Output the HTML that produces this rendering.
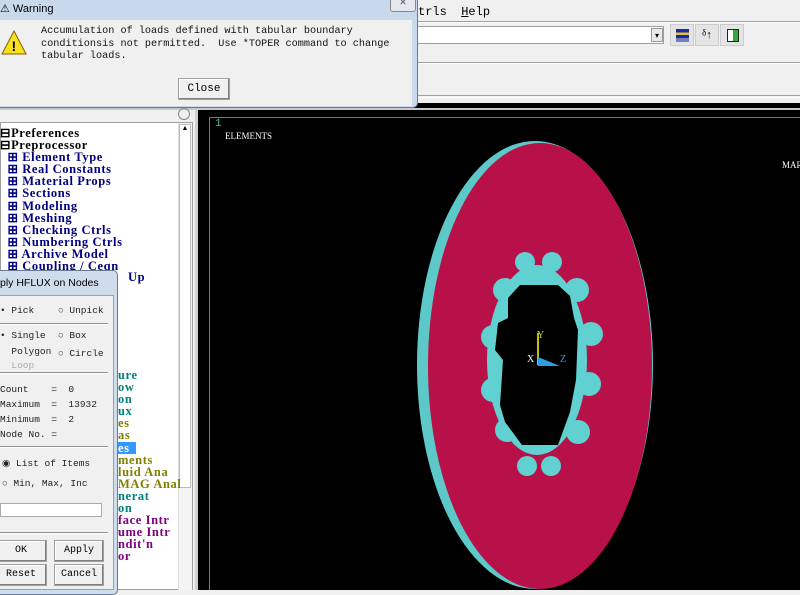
<!DOCTYPE html>
<html><head><style>
*{margin:0;padding:0;box-sizing:border-box}
body{width:800px;height:590px;overflow:hidden;background:#f0f0f0;position:relative;font-family:"Liberation Sans",sans-serif}
.abs{position:absolute}
.mono{font-family:"Liberation Mono",monospace}
.mm div{height:12.1px;line-height:12px;white-space:pre;font-family:"Liberation Serif",serif;font-weight:bold;font-size:12.5px;letter-spacing:0.6px}
.btn{position:absolute;background:#f0f0f0;border:1px solid #a0a0a0;box-shadow:inset -1px -1px #808080,inset 1px 1px #fff;font-family:"Liberation Mono",monospace;font-size:10px;text-align:center;line-height:20px}
.d{font-family:"Liberation Mono",monospace;font-size:9.5px;color:#222;position:absolute;white-space:pre}
</style></head><body>
<div class="abs mono" style="left:418px;top:5px;font-size:12px;color:#000">trls&nbsp;&nbsp;<u>H</u>elp</div>
<div class="abs" style="left:0;top:21px;width:800px;height:2px;border-top:1px solid #a0a0a0;border-bottom:1px solid #fff"></div>
<div class="abs" style="left:410px;top:26px;width:254px;height:18px;background:#fff;border:1px solid #a0a0a0"></div>
<div class="abs" style="left:651px;top:28px;width:12px;height:14px;background:#e8e8e8;border:1px solid #999;font-size:8px;text-align:center;line-height:14px">▾</div>
<div class="abs" style="left:670px;top:24px;width:24px;height:22px;background:#e4e4e4;border:1px solid #ccc"><div style="margin:4px 5px;width:13px;height:13px;background:linear-gradient(#1a2aa0 0 25%,#e0c040 25% 45%,#1a2aa0 45% 70%,#7080c0 70%)"></div></div>
<div class="abs" style="left:695px;top:24px;width:24px;height:22px;background:#e4e4e4;border:1px solid #ccc;font-size:11px;text-align:center;line-height:20px">ᵟ↑</div>
<div class="abs" style="left:720px;top:24px;width:24px;height:22px;background:#e4e4e4;border:1px solid #ccc"><div style="margin:4px 6px;width:12px;height:13px;border:1px solid #222;background:linear-gradient(90deg,#fff 50%,#3a3 50%)"></div></div>
<div class="abs" style="left:0;top:62px;width:800px;height:2px;border-top:1px solid #a0a0a0;border-bottom:1px solid #fff"></div>
<div class="abs" style="left:0;top:95px;width:800px;height:3px;border-top:1px solid #a0a0a0;border-bottom:1px solid #fff"></div>
<div class="abs" style="left:0;top:103px;width:800px;height:6px;background:#000"></div>
<div class="abs" style="left:0;top:108px;width:800px;height:2px;background:#c8c8c8"></div>
<div class="abs" style="left:0;top:110px;width:195px;height:480px;background:#f0f0f0"></div>
<div class="abs" style="left:178px;top:108px;width:12px;height:12px;border:1px solid #888;border-radius:50%"></div>
<div class="abs" style="left:0;top:122px;width:193px;height:468px;background:#fff;border:1px solid #a0a0a0"></div>
<div class="abs" style="left:178px;top:123px;width:14px;height:467px;background:#f4f4f4;border-left:1px solid #ddd"></div>
<div class="abs" style="left:179px;top:124px;width:12px;height:364px;background:#fff;border:1px solid #bbb;font-size:7px;text-align:center">▲</div>
<div class="abs mm" style="left:0;top:127px">
<div style="color:#000">⊟Preferences</div>
<div style="color:#000">⊟Preprocessor</div>
<div style="color:#000080">  ⊞ Element Type</div>
<div style="color:#000080">  ⊞ Real Constants</div>
<div style="color:#000080">  ⊞ Material Props</div>
<div style="color:#000080">  ⊞ Sections</div>
<div style="color:#000080">  ⊞ Modeling</div>
<div style="color:#000080">  ⊞ Meshing</div>
<div style="color:#000080">  ⊞ Checking Ctrls</div>
<div style="color:#000080">  ⊞ Numbering Ctrls</div>
<div style="color:#000080">  ⊞ Archive Model</div>
<div style="color:#000080">  ⊞ Coupling / Ceqn</div>
</div>
<div class="abs mm" style="left:118px;top:369px">
<div style="color:#008080">ure</div><div style="color:#008080">ow</div><div style="color:#008080">on</div><div style="color:#008080">ux</div>
<div style="color:#808000">es</div><div style="color:#808000">as</div><div style="color:#fff;background:#3399ff;width:18px">es</div>
<div style="color:#808000">ments</div><div style="color:#808000">luid Ana</div><div style="color:#808000">MAG Anal</div>
<div style="color:#008080">nerat</div><div style="color:#008080">on</div>
<div style="color:#800080">face Intr</div><div style="color:#800080">ume Intr</div><div style="color:#800080">ndit'n</div><div style="color:#800080">or</div>
</div>
<div class="abs" style="left:195px;top:110px;width:605px;height:480px;background:#000;border-left:3px solid #d0d0d0"></div>
<div class="abs" style="left:209px;top:117px;width:591px;height:473px;border-left:1px solid #777;border-top:1px solid #777"></div>
<div class="abs mono" style="left:215px;top:118px;color:#40c0a0;font-size:11px">1</div>
<div class="abs" style="left:225px;top:131px;color:#fff;font-family:'Liberation Serif',serif;font-size:9px">ELEMENTS</div>
<div class="abs" style="left:782px;top:160px;color:#fff;font-family:'Liberation Serif',serif;font-size:9px">MAR</div>
<svg class="abs" style="left:0;top:0" width="800" height="590">
<ellipse cx="535" cy="365" rx="118" ry="224" fill="#5cc8c8"/>
<ellipse cx="540" cy="366" rx="112" ry="223" fill="#b81048"/>
<g fill="#60d0d0">
<ellipse cx="537" cy="360" rx="50" ry="95"/>
<circle cx="525" cy="262" r="10"/><circle cx="552" cy="262" r="10"/>
<circle cx="505" cy="290" r="12"/><circle cx="577" cy="290" r="12"/>
<circle cx="493" cy="337" r="12"/><circle cx="591" cy="334" r="12"/>
<circle cx="493" cy="390" r="12"/><circle cx="589" cy="384" r="12"/>
<circle cx="507" cy="430" r="12"/><circle cx="578" cy="432" r="12"/>
<circle cx="527" cy="466" r="10"/><circle cx="551" cy="466" r="10"/>
</g>
<path d="M520 285 L558 285 L570 296 L574 318 L578 330 L576 380 L570 412 L558 445 L522 445 L505 422 L500 405 L503 360 L495 350 L498 323 L508 318 L508 298 Z" fill="#000"/>
<line x1="538" y1="365" x2="538" y2="333" stroke="#c0c000" stroke-width="2"/>
<polygon points="538,357 538,366 560,366" fill="#2aa0e0"/>
<text x="537" y="338" fill="#d0d040" font-size="10" font-family="Liberation Serif">Y</text>
<text x="527" y="362" fill="#fff" font-size="10" font-family="Liberation Serif">X</text>
<text x="560" y="362" fill="#2aa0e0" font-size="10" font-family="Liberation Serif">Z</text>
</svg>
<div class="abs" style="left:-5px;top:270px;width:123px;height:325px;background:#cfdcec;border:1px solid #6c7c90;border-radius:5px"></div>
<div class="abs mm" style="left:128px;top:271px"><div style="color:#000080">Up</div></div>
<div class="abs" style="left:0;top:277px;font-size:10.5px;color:#000">ply HFLUX on Nodes</div>
<div class="abs" style="left:-2px;top:295px;width:116px;height:295px;background:#f0f0f0;border:1px solid #a0a0a0"></div>
<div class="d" style="left:0;top:305px">• Pick</div><div class="d" style="left:58px;top:305px">○ Unpick</div>
<div class="abs" style="left:0;top:323px;width:108px;height:2px;border-top:1px solid #909090;border-bottom:1px solid #fff"></div>
<div class="d" style="left:0;top:330px">• Single</div><div class="d" style="left:58px;top:330px">○ Box</div>
<div class="d" style="left:0;top:346px">  Polygon</div><div class="d" style="left:58px;top:348px">○ Circle</div>
<div class="d" style="left:0;top:360px;color:#aaa">  Loop</div>
<div class="abs" style="left:0;top:372px;width:108px;height:2px;border-top:1px solid #909090;border-bottom:1px solid #fff"></div>
<div class="d" style="left:0;top:384px">Count    =  0</div>
<div class="d" style="left:0;top:399px">Maximum  =  13932</div>
<div class="d" style="left:0;top:414px">Minimum  =  2</div>
<div class="d" style="left:0;top:429px">Node No. =</div>
<div class="abs" style="left:0;top:446px;width:108px;height:2px;border-top:1px solid #909090;border-bottom:1px solid #fff"></div>
<div class="d" style="left:2px;top:458px">◉ List of Items</div>
<div class="d" style="left:2px;top:478px">○ Min, Max, Inc</div>
<div class="abs" style="left:0;top:503px;width:102px;height:14px;background:#fff;border:1px solid #aaa"></div>
<div class="abs" style="left:0;top:532px;width:108px;height:2px;border-top:1px solid #909090;border-bottom:1px solid #fff"></div>
<div class="btn" style="left:-5px;top:540px;width:52px;height:22px">OK</div>
<div class="btn" style="left:54px;top:540px;width:50px;height:22px">Apply</div>
<div class="btn" style="left:-5px;top:564px;width:52px;height:22px">Reset</div>
<div class="btn" style="left:54px;top:564px;width:50px;height:22px">Cancel</div>
<div class="abs" style="left:-5px;top:-5px;width:423px;height:113px;background:#c9d9ec;border:1px solid #6a7a90;border-radius:5px"></div>
<div class="abs" style="left:390px;top:-4px;width:26px;height:16px;border:1px solid #888;border-radius:3px;background:#e4e8ee;font-size:9px;text-align:center;color:#555">✕</div>
<div class="abs" style="left:0;top:2px;font-size:11px">⚠ Warning</div>
<div class="abs" style="left:-1px;top:20px;width:413px;height:86px;background:#f0f0f0"></div>
<svg class="abs" style="left:1px;top:30px" width="26" height="26"><polygon points="13,1 25,24 1,24" fill="#f8e020" stroke="#806000"/><text x="10.5" y="21" font-size="14" font-weight="bold" font-family="Liberation Sans">!</text></svg>
<div class="abs mono" style="left:41px;top:26px;font-size:10.2px;line-height:12.5px;white-space:pre;color:#111">Accumulation of loads defined with tabular boundary
conditionsis not permitted.  Use *TOPER command to change
tabular loads.</div>
<div class="btn" style="left:178px;top:78px;width:52px;height:22px;font-size:11px">Close</div>
</body></html>
